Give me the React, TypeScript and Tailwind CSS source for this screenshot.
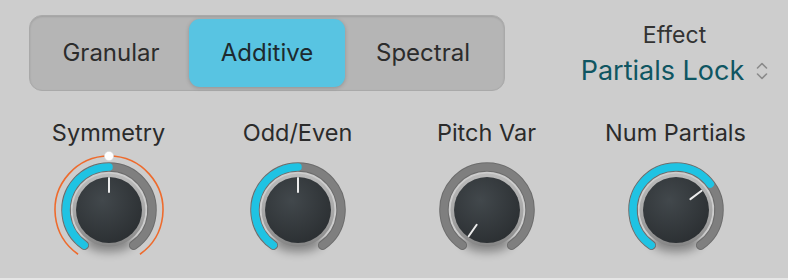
import React from "react";

const FONT = { fontFamily: "Inter, 'Liberation Sans', sans-serif" };

const KNOBS = [
  { label: "Symmetry", value: 0, modulated: true },
  { label: "Odd/Even", value: 0, modulated: false },
  { label: "Pitch Var", value: -145, modulated: false },
  { label: "Num Partials", value: 53, modulated: false },
];

const MIN = -145;
const MAX = 145;
const C = 60;

function pt(r: number, deg: number) {
  const a = (deg * Math.PI) / 180;
  return [C + r * Math.sin(a), C - r * Math.cos(a)];
}

function arc(r: number, a0: number, a1: number) {
  const [x0, y0] = pt(r, a0);
  const [x1, y1] = pt(r, a1);
  const large = a1 - a0 > 180 ? 1 : 0;
  return `M ${x0} ${y0} A ${r} ${r} 0 ${large} 1 ${x1} ${y1}`;
}

function Knob({ value, modulated, id }: { value: number; modulated: boolean; id: number }) {
  const [ix0, iy0] = pt(18, value);
  const [ix1, iy1] = pt(32, value);
  return (
    <svg width="120" height="120" viewBox="0 0 120 120">
      <defs>
        <radialGradient id={`body${id}`} cx="40%" cy="35%" r="70%">
          <stop offset="0%" stopColor="#42484c" />
          <stop offset="100%" stopColor="#2b2f32" />
        </radialGradient>
        <linearGradient id={`bezel${id}`} x1="0" y1="0" x2="0" y2="1">
          <stop offset="0%" stopColor="#bcbcbc" />
          <stop offset="60%" stopColor="#a4a4a4" />
          <stop offset="100%" stopColor="#858585" />
        </linearGradient>
        <filter id={`blur${id}`} x="-50%" y="-50%" width="200%" height="200%">
          <feGaussianBlur stdDeviation="5" />
        </filter>
      </defs>
      {/* drop shadow under the knob */}
      <ellipse cx={C} cy={C + 32} rx="24" ry="10" fill="#000" opacity="0.35" filter={`url(#blur${id})`} />
      {modulated && <path d={arc(54, MIN, MAX)} stroke="#ee6b2d" strokeWidth="1.6" fill="none" />}
      <path d={arc(43, MIN, MAX)} stroke="#6c6c6c" strokeWidth="9.5" strokeLinecap="round" fill="none" />
      <path d={arc(43, MIN, MAX)} stroke="#7f7f7f" strokeWidth="7.5" strokeLinecap="round" fill="none" />
      {value > MIN && (
        <path d={arc(43, MIN, value)} stroke="#1fc3e3" strokeWidth="7.5" strokeLinecap="round" fill="none" />
      )}
      <circle cx={C} cy={C} r="36.5" fill={`url(#bezel${id})`} />
      <circle cx={C} cy={C} r="33" fill={`url(#body${id})`} />
      <line x1={ix0} y1={iy0} x2={ix1} y2={iy1} stroke="#ececec" strokeWidth="2" strokeLinecap="round" />
      {modulated && <circle cx={C} cy={C - 54} r="4.6" fill="#ffffff" stroke="#d8d8d8" strokeWidth="0.5" />}
    </svg>
  );
}

export default function App() {
  return (
    <div className="w-[788px] h-[280px] bg-[#cdcdcd] overflow-hidden flex flex-col border-b-2 border-[#e6e6e6]" style={FONT}>
      {/* Header: mode switch + effect menu */}
      <div className="flex items-start pt-[15px] pl-[29px]">
        <div className="w-[476px] h-[76px] rounded-[13px] bg-[#b5b5b5] border border-[#a9a9a9] shadow-[inset_0_1px_2px_rgba(0,0,0,0.12)] p-[3px] flex">
          {["Granular", "Additive", "Spectral"].map((t) => (
            <div
              key={t}
              className={
                t === "Additive"
                  ? "flex-1 rounded-[11px] bg-[#58c4e2] flex items-center justify-center text-[24px] text-[#1d2a2f] shadow-[0_1px_4px_rgba(0,0,0,0.2)]"
                  : "flex-1 flex items-center justify-center text-[24px] text-[#2c2c2c]"
              }
            >
              {t}
            </div>
          ))}
        </div>
        <div className="flex-1 flex flex-col items-center pt-[6px] pl-[56px]">
          <div className="text-[23px] leading-[28px] text-[#333333]">Effect</div>
          <div className="flex items-center gap-[12px] mt-[5px]">
            <span className="text-[27px] leading-[34px] text-[#0f5662]">Partials Lock</span>
            <svg width="12" height="20" viewBox="0 0 12 20">
              <path d="M1.5 7 L6 2.5 L10.5 7" stroke="#8a8a8a" strokeWidth="1.6" fill="none" strokeLinecap="round" strokeLinejoin="round" />
              <path d="M1.5 13 L6 17.5 L10.5 13" stroke="#8a8a8a" strokeWidth="1.6" fill="none" strokeLinecap="round" strokeLinejoin="round" />
            </svg>
          </div>
        </div>
      </div>

      {/* Knobs */}
      <div className="flex pl-[14px] mt-[28px]">
        {KNOBS.map((k, i) => (
          <div key={k.label} className="w-[189px] flex flex-col items-center">
            <div className="text-[23.5px] leading-[28px] text-[#2b2b2b]">{k.label}</div>
            <div className="mt-[3px]">
              <Knob value={k.value} modulated={k.modulated} id={i} />
            </div>
          </div>
        ))}
      </div>
    </div>
  );
}
